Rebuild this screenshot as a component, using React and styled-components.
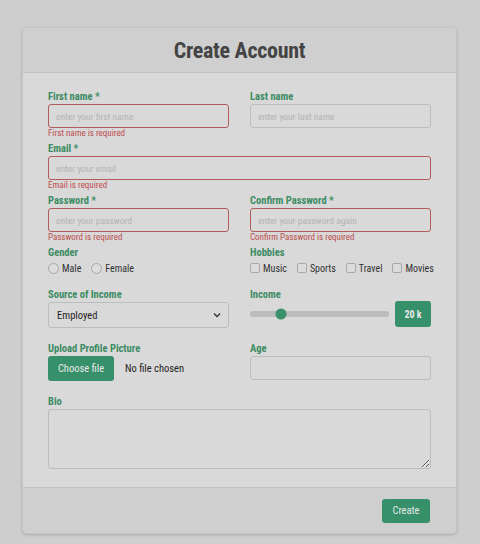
import React from "react";
import styled, { createGlobalStyle } from "styled-components";

const FONT = `"Roboto Condensed", "Liberation Sans Narrow", "DejaVu Sans", sans-serif`;

const Global = createGlobalStyle`
  html, body { margin: 0; padding: 0; background: #cecece; }
  body { font-family: ${FONT}; font-stretch: condensed; }
  * { box-sizing: border-box; }
  input, button, textarea { font-family: ${FONT}; font-stretch: condensed; }
`;

const Page = styled.div`
  width: 480px;
  height: 544px;
  padding: 27px 23px 0 22px;
  background: #cecece;
`;

const Card = styled.div`
  background: #d9d9d9;
  border: 1px solid #c4c4c4;
  border-radius: 5px;
  box-shadow: 0 1px 3px rgba(0,0,0,0.18);
  overflow: hidden;
`;

const Header = styled.div`
  height: 45px;
  background: #cfcfcf;
  border-bottom: 1px solid #c2c2c2;
  display: flex;
  align-items: center;
  justify-content: center;
`;

const Title = styled.h1`
  margin: 0;
  font-weight: 700;
  font-size: 22px;
  letter-spacing: -0.3px;
  color: #444;
`;

const Body = styled.div`
  padding: 17px 26px 18px 25px;
  display: grid;
  grid-template-columns: 181px 181px;
  column-gap: 21px;
`;

const Field = styled.div`
  display: flex;
  flex-direction: column;
  grid-column: ${(p) => (p.$full ? "1 / span 2" : "auto")};
  margin-bottom: ${(p) => p.$mb ?? 0}px;
`;

const Label = styled.label`
  font-size: 10.5px;
  font-weight: 700;
  color: #3d8c64;
  line-height: 13px;
  margin-bottom: 1px;
`;

const Input = styled.input`
  height: 24px;
  width: 100%;
  padding: 0 7px;
  font-size: 9.5px;
  background: #d9d9d9;
  border: 1px solid ${(p) => (p.$error ? "#b25c5c" : "#bdbdbd")};
  border-radius: 3px;
  outline: none;
  &::placeholder { color: #b3b3b3; }
`;

const ErrorText = styled.div`
  font-size: 9px;
  color: #bd4e4e;
  line-height: 10px;
  padding-bottom: 4px;
`;

const OptionRow = styled.div`
  display: flex;
  align-items: center;
  gap: ${(p) => p.$gap}px;
  height: 16px;
`;

const Option = styled.span`
  display: flex;
  align-items: center;
  gap: 3px;
  font-size: 10px;
  color: #333;
`;

const Radio = styled.span`
  width: 11px;
  height: 11px;
  border-radius: 50%;
  border: 1px solid #a8a8a8;
  background: #dcdcdc;
`;

const Check = styled.span`
  width: 10px;
  height: 10px;
  border-radius: 2px;
  border: 1px solid #a8a8a8;
  background: #dcdcdc;
`;

const Select = styled.div`
  height: 26px;
  border: 1px solid #bdbdbd;
  border-radius: 3px;
  display: flex;
  align-items: center;
  justify-content: space-between;
  padding: 0 7px 0 8px;
  font-size: 10.5px;
  color: #222;
  background: #d9d9d9;
`;

const SliderRow = styled.div`
  display: flex;
  align-items: center;
  gap: 6px;
  height: 26px;
  margin-top: -1px;
`;

const Track = styled.div`
  position: relative;
  flex: 1;
  height: 6px;
  border-radius: 3px;
  background: #bcbcbc;
`;

const Thumb = styled.span`
  position: absolute;
  top: 50%;
  width: 11px;
  height: 11px;
  border-radius: 50%;
  background: #3a9068;
  transform: translate(-50%, -50%);
`;

const Badge = styled.div`
  width: 36px;
  height: 26px;
  border-radius: 3px;
  background: #36906a;
  color: #eaeaea;
  font-size: 10px;
  font-weight: 700;
  display: flex;
  align-items: center;
  justify-content: center;
`;

const FileRow = styled.div`
  display: flex;
  align-items: center;
  gap: 11px;
  height: 25px;
`;

const GreenButton = styled.button`
  height: ${(p) => p.$h}px;
  width: ${(p) => p.$w}px;
  border: none;
  border-radius: 3px;
  background: #36906a;
  color: #e8e8e8;
  font-size: 10.5px;
  padding: 0;
`;

const FileText = styled.span`
  font-size: 10.5px;
  color: #222;
`;

const TextArea = styled.textarea`
  height: 60px;
  width: 100%;
  resize: vertical;
  background: #d9d9d9;
  border: 1px solid #bdbdbd;
  border-radius: 3px;
  outline: none;
`;

const Footer = styled.div`
  height: 46px;
  background: #cfcfcf;
  border-top: 1px solid #c2c2c2;
  display: flex;
  align-items: center;
  justify-content: flex-end;
  padding-right: 26px;
`;

export default function App() {
  return (
    <Page>
      <Global />
      <Card>
        <Header>
          <Title>Create Account</Title>
        </Header>
        <Body>
          <Field>
            <Label>First name *</Label>
            <Input $error placeholder="enter your first name" />
            <ErrorText>First name is required</ErrorText>
          </Field>
          <Field>
            <Label>Last name</Label>
            <Input placeholder="enter your last name" />
          </Field>
          <Field $full>
            <Label>Email *</Label>
            <Input $error placeholder="enter your email" />
            <ErrorText>Email is required</ErrorText>
          </Field>
          <Field>
            <Label>Password *</Label>
            <Input $error placeholder="enter your password" />
            <ErrorText>Password is required</ErrorText>
          </Field>
          <Field>
            <Label>Confirm Password *</Label>
            <Input $error placeholder="enter your password again" />
            <ErrorText>Confirm Password is required</ErrorText>
          </Field>
          <Field $mb={12}>
            <Label>Gender</Label>
            <OptionRow $gap={10}>
              <Option><Radio />Male</Option>
              <Option><Radio />Female</Option>
            </OptionRow>
          </Field>
          <Field $mb={12}>
            <Label>Hobbies</Label>
            <OptionRow $gap={10}>
              <Option><Check />Music</Option>
              <Option><Check />Sports</Option>
              <Option><Check />Travel</Option>
              <Option><Check />Movies</Option>
            </OptionRow>
          </Field>
          <Field $mb={14}>
            <Label>Source of Income</Label>
            <Select>
              <span>Employed</span>
              <svg width="8" height="6" viewBox="0 0 8 6">
                <path d="M1 1.5 L4 4.5 L7 1.5" fill="none" stroke="#333" strokeWidth="1.3" />
              </svg>
            </Select>
          </Field>
          <Field $mb={14}>
            <Label>Income</Label>
            <SliderRow>
              <Track>
                <Thumb style={{ left: "22%" }} />
              </Track>
              <Badge>20 k</Badge>
            </SliderRow>
          </Field>
          <Field $mb={14}>
            <Label>Upload Profile Picture</Label>
            <FileRow>
              <GreenButton $w={66} $h={25}>Choose file</GreenButton>
              <FileText>No file chosen</FileText>
            </FileRow>
          </Field>
          <Field $mb={14}>
            <Label>Age</Label>
            <Input />
          </Field>
          <Field $full>
            <Label>Bio</Label>
            <TextArea />
          </Field>
        </Body>
        <Footer>
          <GreenButton $w={48} $h={24}>Create</GreenButton>
        </Footer>
      </Card>
    </Page>
  );
}
